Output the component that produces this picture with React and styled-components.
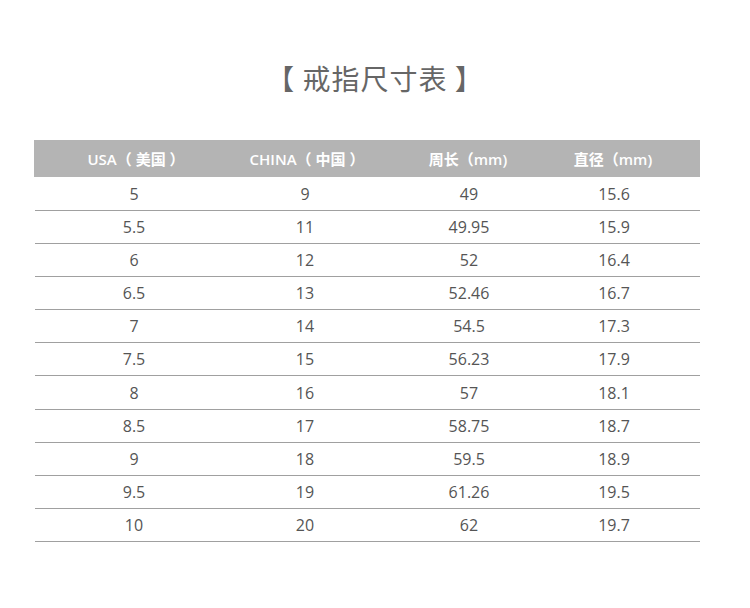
import React from "react";
import styled, { createGlobalStyle } from "styled-components";

const GlobalStyle = createGlobalStyle`
  body {
    margin: 0;
    background: #ffffff;
    font-family: "Open Sans", "Noto Sans CJK SC", sans-serif;
  }
`;

const Page = styled.div`
  width: 750px;
  height: 608px;
  padding-top: 57px;
  box-sizing: border-box;
`;

const Title = styled.h1`
  margin: 0;
  text-align: center;
  font-family: "Noto Sans CJK SC", sans-serif;
  font-weight: 400;
  font-size: 28px;
  line-height: 42px;
  color: #666666;
  letter-spacing: 1px;
`;

const Table = styled.div`
  margin: 41px 0 0 34px;
  width: 666px;
`;

const Row = styled.div`
  display: grid;
  grid-template-columns: 198px 144px 184px 140px;
  align-items: center;
  box-sizing: border-box;
  height: ${(p) => (p.$head ? "37px" : p.$first ? "34px" : "33.1px")};
  background: ${(p) => (p.$head ? "#b4b4b4" : "transparent")};
  border-bottom: ${(p) => (p.$head ? "none" : "1px solid #a0a0a0")};
  margin-left: ${(p) => (p.$head ? "0" : "1px")};
`;

const Cell = styled.div`
  text-align: center;
  font-size: ${(p) => (p.$head ? "15px" : "16px")};
  font-weight: ${(p) => (p.$head ? 600 : 400)};
  color: ${(p) => (p.$head ? "#ffffff" : "#555555")};
  padding-right: ${(p) => (p.$last ? "34px" : "0")};
  padding-left: ${(p) => (p.$head && p.$pad ? "6px" : "0")};
  white-space: pre;
`;

const headers = ["USA（ 美国 ）", "CHINA（ 中国 ）", "周长（mm)", "直径（mm)"];

const rows = [
  ["5", "9", "49", "15.6"],
  ["5.5", "11", "49.95", "15.9"],
  ["6", "12", "52", "16.4"],
  ["6.5", "13", "52.46", "16.7"],
  ["7", "14", "54.5", "17.3"],
  ["7.5", "15", "56.23", "17.9"],
  ["8", "16", "57", "18.1"],
  ["8.5", "17", "58.75", "18.7"],
  ["9", "18", "59.5", "18.9"],
  ["9.5", "19", "61.26", "19.5"],
  ["10", "20", "62", "19.7"],
];

export default function App() {
  return (
    <Page>
      <GlobalStyle />
      <Title>【 戒指尺寸表 】</Title>
      <Table>
        <Row $head>
          {headers.map((h, i) => (
            <Cell key={h} $head $pad={i < 2} $last={i === 3}>
              {h}
            </Cell>
          ))}
        </Row>
        {rows.map((r, ri) => (
          <Row key={r[0]} $first={ri === 0}>
            {r.map((v, i) => (
              <Cell key={i} $last={i === 3}>
                {v}
              </Cell>
            ))}
          </Row>
        ))}
      </Table>
    </Page>
  );
}
